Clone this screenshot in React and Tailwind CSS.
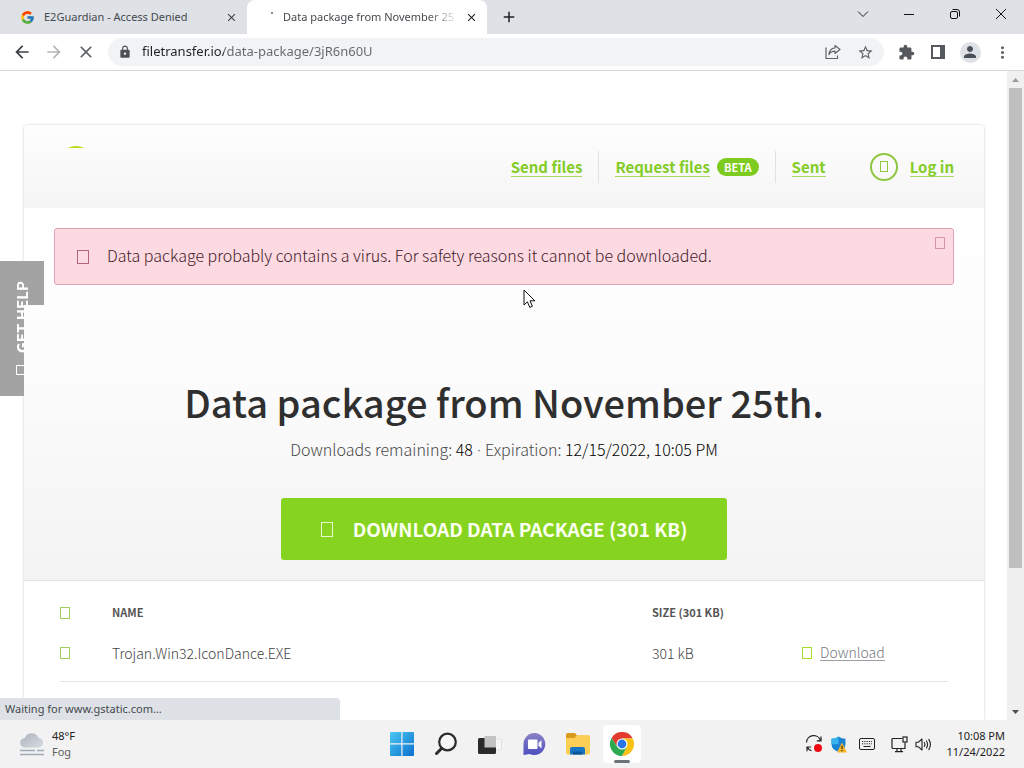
import React from "react";
import {
  MdArrowBack,
  MdArrowForward,
  MdClose,
  MdLock,
  MdStarBorder,
  MdExtension,
  MdMoreVert,
  MdPerson,
  MdAdd,
} from "react-icons/md";
import { FcGoogle } from "react-icons/fc";

/* Outline box shown while the icon font is loading */
function Glyph({ className = "" }) {
  return <span aria-hidden="true" className={`inline-block shrink-0 border ${className}`} />;
}

function ShareIcon() {
  return (
    <svg width="16" height="16" viewBox="0 0 16 16" fill="none" stroke="#5f6368" strokeWidth="1.2" strokeLinejoin="round">
      <path d="M1 3.5V14.5H12.5V11.5" />
      <path d="M10 1.5L15 5.5L10 9.5V7.2C7 7.2 5.2 8.2 4 10.6C4.2 6.6 6.6 4.2 10 3.8Z" />
    </svg>
  );
}

function PanelIcon() {
  return (
    <svg width="14" height="14" viewBox="0 0 14 14">
      <rect x="1" y="1" width="12" height="12" fill="#fff" stroke="#55585c" strokeWidth="2" />
      <rect x="9" y="1" width="4" height="12" fill="#55585c" />
    </svg>
  );
}

function TabStrip() {
  return (
    <header className="flex h-[34px] shrink-0 bg-[#dee1e6] text-[11px]">
      <div className="flex w-[247px] shrink-0 items-center pl-5 pr-2">
        <FcGoogle size={15} />
        <span className="ml-[9px] flex-1 text-[#45494d]">E2Guardian - Access Denied</span>
        <button aria-label="Close tab" className="flex size-4 items-center justify-center text-[#3c4043]">
          <MdClose size={13} />
        </button>
      </div>
      <div className="relative flex w-[240px] shrink-0 items-center rounded-t-lg bg-white pl-9 pr-2">
        <span className="absolute left-6 top-3 size-[2px] rounded-full bg-[#5f6368]" />
        <span className="flex-1 overflow-hidden whitespace-nowrap text-[#45494d] [mask-image:linear-gradient(to_right,black_82%,transparent)]">
          Data package from November 25
        </span>
        <button aria-label="Close tab" className="ml-1 flex size-4 shrink-0 items-center justify-center text-[#202124]">
          <MdClose size={13} />
        </button>
      </div>
      <button aria-label="New tab" className="flex w-11 items-center justify-center text-[#202124]">
        <MdAdd size={18} />
      </button>
      <div className="ml-auto flex h-7">
        <button aria-label="Search tabs" className="flex w-[46px] items-center justify-center">
          <svg width="12" height="12" viewBox="0 0 12 12" fill="none" stroke="#222">
            <path d="M1 3.5L6 8.5L11 3.5" />
          </svg>
        </button>
        <button aria-label="Minimize" className="flex w-[46px] items-center justify-center">
          <svg width="10" height="11" viewBox="0 0 10 11" stroke="#111">
            <path d="M0 5.5H10" />
          </svg>
        </button>
        <button aria-label="Restore" className="flex w-[46px] items-center justify-center">
          <svg width="10" height="10" viewBox="0 0 10 10" fill="none" stroke="#111">
            <rect x="0.5" y="2.5" width="7" height="7" rx="1.5" />
            <path d="M2.5 0.5H7A2.5 2.5 0 0 1 9.5 3V7.5" />
          </svg>
        </button>
        <button aria-label="Close window" className="flex w-[46px] items-center justify-center">
          <svg width="10" height="10" viewBox="0 0 10 10" stroke="#111">
            <path d="M0 0L10 10M10 0L0 10" />
          </svg>
        </button>
      </div>
    </header>
  );
}

function Toolbar() {
  return (
    <div className="flex h-[37px] shrink-0 items-center border-b border-[#d5d7da] bg-white pl-3 text-[#5f6368]">
      <button aria-label="Back" className="mr-3 text-[#3c4043]"><MdArrowBack size={20} /></button>
      <button aria-label="Forward" className="mr-3 text-[#b4b7ba]"><MdArrowForward size={20} /></button>
      <button aria-label="Stop loading"><MdClose size={20} /></button>
      <form className="ml-3 mr-1.5 flex h-7 flex-1 items-center rounded-full bg-[#f1f3f4] px-2.5">
        <MdLock size={14} className="shrink-0 text-[#4d5156]" />
        <input
          aria-label="Address"
          defaultValue="filetransfer.io/data-package/3jR6n60U"
          className="ml-2.5 min-w-0 flex-1 bg-[linear-gradient(90deg,#202124_82px,#63676b_82px)] bg-clip-text text-[13px] text-transparent outline-none"
        />
        <button type="button" aria-label="Share" className="mr-4"><ShareIcon /></button>
        <button type="button" aria-label="Bookmark"><MdStarBorder size={17} /></button>
      </form>
      <button aria-label="Extensions" className="flex w-8 justify-center text-[#55585c]"><MdExtension size={17} /></button>
      <button aria-label="Side panel" className="flex w-8 justify-center"><PanelIcon /></button>
      <button aria-label="Profile" className="flex w-8 justify-center">
        <span className="flex size-[21px] items-center justify-center rounded-full bg-[#dee1e6] text-[#4b5159]"><MdPerson size={18} /></span>
      </button>
      <button aria-label="Menu" className="mr-1.5 flex w-8 justify-center"><MdMoreVert size={19} /></button>
    </div>
  );
}

function SiteNav() {
  const link = "border-b border-[#a4d860] leading-[19px]";
  return (
    <div className="flex h-[83px] items-center rounded-t bg-linear-to-b from-[#fefefe] to-[#f5f5f5] pl-11 pr-[30px]">
      <svg width="16" height="2" viewBox="0 0 16 2" className="-mt-10">
        <path d="M0 2Q4 0 8 0T16 2Z" fill="#b9dc18" />
      </svg>
      <nav className="ml-auto flex items-center text-[15px] font-bold text-[#84cc26]">
        <a href="#send" className={link}>Send files</a>
        <span className="mx-4 h-8 w-px bg-[#e2e2e2]" />
        <a href="#request" className={link}>Request files</a>
        <span className="ml-[7px] rounded-full bg-[#7ecb20] px-[7px] text-[11px] leading-[18px] text-white">BETA</span>
        <span className="mx-4 h-8 w-px bg-[#e2e2e2]" />
        <a href="#sent" className={link}>Sent</a>
        <a href="#login" className="ml-11 flex items-center">
          <span className="mr-3 flex size-7 items-center justify-center rounded-full border-2 border-[#8fc741]">
            <Glyph className="h-[11px] w-2 border-[#8fc741]" />
          </span>
          <span className={link}>Log in</span>
        </a>
      </nav>
    </div>
  );
}

function Hero() {
  return (
    <section className="border-b border-[#e3e3e3] bg-linear-to-b from-white via-[#fbfbfb] to-[#f3f3f3] px-[30px] py-5 text-center">
      <div role="alert" className="flex h-[57px] rounded-[3px] border border-[#dfa3b3] bg-[#fdd9e1] pl-[22px] pr-2 text-left text-[#3f2029]">
        <Glyph className="mt-[21px] h-[14px] w-3 border-[#b0657b]" />
        <p className="ml-[18px] flex-1 text-base font-light leading-[53px]">
          Data package probably contains a virus. For safety reasons it cannot be downloaded.
        </p>
        <button aria-label="Dismiss" className="mt-2 flex self-start">
          <Glyph className="h-3 w-2.5 border-[#d395a6]" />
        </button>
      </div>
      <h1 className="mt-[91px] text-[38px] font-medium leading-[52px] text-[#2f2f2f]">Data package from November 25th.</h1>
      <p className="mt-[9px] text-base font-light leading-6 text-[#484848]">
        Downloads remaining: <span className="text-black">48</span>
        <span className="font-['Open_Sans',sans-serif]"> · </span>
        Expiration: <span className="text-black">12/15/2022, 10:05 PM</span>
      </p>
      <button className="mt-9 inline-flex h-[62px] items-center rounded-[3px] bg-[#86d41f] px-10 align-top text-[19px] font-bold text-[#fbfff0]">
        <Glyph className="mr-5 h-[15px] w-3 border-[#e8f8cf]" />
        DOWNLOAD DATA PACKAGE (301 KB)
      </button>
    </section>
  );
}

function FileTable() {
  const check = "block h-3 w-2.5 appearance-none border border-[#a0cf60] bg-white";
  return (
    <div className="px-9 pt-3">
      <table className="w-full table-fixed border-collapse text-left text-sm text-[#444]">
        <colgroup>
          <col className="w-[52px]" />
          <col />
          <col className="w-[150px]" />
          <col className="w-[146px]" />
        </colgroup>
        <thead>
          <tr className="h-10 text-[11px] text-[#555]">
            <th><input type="checkbox" aria-label="Select all files" className={check} /></th>
            <th>NAME</th>
            <th>SIZE (301 KB)</th>
            <th aria-label="Actions" />
          </tr>
        </thead>
        <tbody>
          <tr className="border-b border-[#e4e4e4] font-light">
            <td className="h-12 pb-2"><input type="checkbox" aria-label="Select Trojan.Win32.IconDance.EXE" className={check} /></td>
            <td className="pb-2">Trojan.Win32.IconDance.EXE</td>
            <td className="pb-2">301 kB</td>
            <td className="pb-2">
              <a href="#download" className="flex items-center text-[#777b7f]">
                <Glyph className="mr-2 h-3 w-2.5 border-[#a5dc2e]" />
                <span className="border-b border-[#9a9fa3] leading-4">Download</span>
              </a>
            </td>
          </tr>
        </tbody>
      </table>
    </div>
  );
}

function Scrollbar() {
  return (
    <div aria-hidden="true" className="flex w-[17px] shrink-0 flex-col items-center bg-[#f0f0f0]">
      <svg className="shrink-0" width="17" height="17" viewBox="0 0 17 17"><path d="M5 11L8.5 7L12 11Z" fill="#9b9b9b" /></svg>
      <div className="h-[74%] w-[13px] bg-[#bfbfbf]" />
      <svg className="mt-auto shrink-0" width="17" height="17" viewBox="0 0 17 17"><path d="M5 7L8.5 11L12 7Z" fill="#4d4d4d" /></svg>
    </div>
  );
}

function Page() {
  return (
    <main className="relative flex min-h-0 flex-1 bg-white">
      <div className="min-w-0 flex-1 overflow-hidden pl-6 pr-[23px] pt-[54px] font-['Noto_Sans_CJK_SC',sans-serif]">
        <div className="h-full rounded-t shadow-[0_0_3px_rgba(0,0,0,0.2)]">
          <SiteNav />
          <Hero />
          <FileTable />
        </div>
      </div>
      <Scrollbar />
      <button className="absolute left-0 top-[190px] flex h-[135px] w-11 justify-center bg-[#a3a3a3] font-['Noto_Sans_CJK_SC',sans-serif] text-[15px] font-bold text-white [clip-path:polygon(0_0,44px_0,44px_44px,24px_44px,24px_100%,0_100%)]">
        <span className="flex h-full w-11 rotate-180 items-center pt-[21px] leading-[44px] [writing-mode:vertical-rl]">
          <Glyph className="mb-3 h-2.5 w-3 border-white" />
          GET HELP
        </span>
      </button>
      <svg className="absolute left-[523px] top-[218px]" width="13" height="20" viewBox="0 0 13 20">
        <path d="M1 1V16L4.4 12.8L6.8 18.4L9.4 17.3L7 11.8H11.8Z" fill="#fff" stroke="#111" />
      </svg>
      <div className="absolute bottom-0 left-0 h-[22px] w-[340px] rounded-tr bg-[#dee1e6] pl-[5px] text-[11px] leading-[22px] text-[#45494d]">
        Waiting for www.gstatic.com...
      </div>
    </main>
  );
}

function ChromeLogo() {
  return (
    <svg width="24" height="24" viewBox="0 0 24 24">
      <path d="M12 6.5H22.7A12 12 0 0 0 1.6 6L7.2 14.8Z" fill="#e33b2e" />
      <path d="M16.8 14.8L12 24A12 12 0 0 0 22.7 6.5H12Z" fill="#fbc116" />
      <path d="M7.2 14.8L1.6 6A12 12 0 0 0 12 24L16.8 14.8Z" fill="#2da94f" />
      <circle cx="12" cy="12" r="5.5" fill="#fff" />
      <circle cx="12" cy="12" r="4.4" fill="#2874e8" />
    </svg>
  );
}

function Taskbar() {
  const app = "flex h-12 w-11 items-center justify-center";
  return (
    <footer className="grid h-12 shrink-0 grid-cols-[1fr_auto_1fr] items-center bg-[#f2f2f2] text-[#222]">
      <button className="flex items-center pl-5 text-left text-[11px] leading-4">
        <svg width="24" height="24" viewBox="0 0 24 24">
          <defs>
            <linearGradient id="cloud" x1="0" y1="0" x2="1" y2="1">
              <stop offset="0" stopColor="#aeb4ba" />
              <stop offset="1" stopColor="#d5dbe2" />
            </linearGradient>
          </defs>
          <path d="M5 15.5A4.7 4.7 0 0 1 4.7 6A7.5 7.5 0 0 1 18.7 6A4.8 4.8 0 0 1 19 15.5Z" fill="url(#cloud)" />
          <path d="M0 18.5H15M17 18.5H24M0 22.5H24" stroke="#9fabb8" strokeWidth="1.6" />
        </svg>
        <span className="ml-2">48°F<br /><span className="text-[#5e5e5e]">Fog</span></span>
      </button>
      <div className="flex">
        <button aria-label="Start" className={app}>
          <svg width="24" height="24" viewBox="0 0 24 24">
            <defs>
              <linearGradient id="win" x1="0" y1="0" x2="1" y2="1">
                <stop offset="0" stopColor="#4cc8f4" />
                <stop offset="1" stopColor="#0a70cc" />
              </linearGradient>
            </defs>
            <path d="M0 1Q0 0 1 0H11.3V11.3H0ZM12.5 0H23Q24 0 24 1V11.3H12.5ZM0 12.5H11.3V24H1Q0 24 0 23ZM12.5 12.5H24V23Q24 24 23 24H12.5Z" fill="url(#win)" />
          </svg>
        </button>
        <button aria-label="Search" className={app}>
          <svg width="24" height="24" viewBox="0 0 24 24" fill="none" stroke="#2b2b2b" strokeLinecap="round">
            <circle cx="13.5" cy="10" r="8.3" fill="#f8f8f8" strokeWidth="2.2" />
            <path d="M7.5 16.5L2.5 21.5" strokeWidth="3" />
          </svg>
        </button>
        <button aria-label="Task view" className={app}>
          <svg width="24" height="24" viewBox="0 0 24 24">
            <rect x="7" y="7" width="16.5" height="11" rx="1" fill="#f8f8f8" stroke="#e0e0e0" />
            <rect x="0" y="6" width="18" height="16" rx="1.5" fill="#2b2b2b" />
            <path d="M6.5 4H18V15.5H6.5Z" fill="#c3c3c3" />
          </svg>
        </button>
        <button aria-label="Chat" className={app}>
          <svg width="24" height="24" viewBox="0 0 24 24">
            <defs>
              <linearGradient id="chat" x1="0" y1="0" x2="0" y2="1">
                <stop offset="0" stopColor="#8b82c6" />
                <stop offset="1" stopColor="#4d4fbd" />
              </linearGradient>
            </defs>
            <path d="M12.5 1A11 11 0 1 1 7.5 21.9L1.5 23V12A11 11 0 0 1 12.5 1Z" fill="url(#chat)" />
            <rect x="6" y="7.5" width="9.5" height="9.5" rx="1" fill="#fff" />
            <path d="M16.5 11L19.5 8V16.5L16.5 13.5Z" fill="#fff" />
          </svg>
        </button>
        <button aria-label="File Explorer" className={app}>
          <svg width="24" height="24" viewBox="0 0 24 24">
            <path d="M0 3Q0 1 2 1H9L11 3.5H22.5Q24 3.5 24 5V9H0Z" fill="#d99a1c" />
            <path d="M0 6H8.5L11 3.2H22.5Q24 3.2 24 5V20.5Q24 22.5 22 22.5H2Q0 22.5 0 20.5Z" fill="#fbcf55" />
            <path d="M4 22.5V17Q4 15 6 15H17Q19 15 19 17V22.5Z" fill="#1674c5" />
            <path d="M7 22.5V20.5Q7 19.5 8 19.5H15Q16 19.5 16 20.5V22.5Z" fill="#0b559d" />
          </svg>
        </button>
        <button aria-label="Google Chrome" className="relative flex h-12 w-11 items-center justify-center">
          <span className="flex size-[38px] items-center justify-center rounded bg-white"><ChromeLogo /></span>
          <span className="absolute bottom-[5px] h-[3px] w-4 rounded-full bg-[#6c7378]" />
        </button>
      </div>
      <div className="flex items-center justify-end pr-[19px]">
        <button aria-label="Updates">
          <svg width="18" height="18" viewBox="0 0 18 18" fill="none" stroke="#222" strokeWidth="1.2">
            <path d="M1.5 7.5A7.2 7.2 0 0 1 15.5 5.5M16 1.5V5.8H11.8M6.5 15.8A7 7 0 0 1 2.2 12M2 16.2V12H6.2" />
            <circle cx="13" cy="13" r="4" fill="#ee0c12" stroke="none" />
          </svg>
        </button>
        <button aria-label="Security" className="ml-2">
          <svg width="16" height="17" viewBox="0 0 16 17">
            <path d="M7.5 0.5Q10.5 2.8 14.5 2.8V8Q14.5 13.5 7.5 16Q0.5 13.5 0.5 8V2.8Q4.5 2.8 7.5 0.5Z" fill="#1b83d4" />
            <path d="M7.5 0.5V8.2H0.5V2.8Q4.5 2.8 7.5 0.5Z" fill="#35b3ee" />
            <path d="M11 6.5L16 16.5H6Z" fill="#fbb62c" />
            <path d="M11 9.8V13M11 14V15.2" stroke="#33280f" strokeWidth="1.2" />
          </svg>
        </button>
        <button aria-label="Touch keyboard" className="ml-3">
          <svg width="16" height="12" viewBox="0 0 16 12" fill="none" stroke="#222">
            <rect x="0.5" y="0.5" width="15" height="11" rx="1.5" />
            <path d="M3 3.5H13M3 5.8H13" strokeDasharray="1.2 1.1" />
            <path d="M4.5 8.5H11.5" />
          </svg>
        </button>
        <button aria-label="Network" className="ml-4">
          <svg width="17" height="17" viewBox="0 0 17 17" fill="none" stroke="#222" strokeWidth="1.2">
            <path d="M11 2.5H2Q1 2.5 1 3.5V11.5Q1 12.5 2 12.5H14V6.5M6 12.5V15.5M10 12.5V15.5M4 15.6H12" />
            <rect x="12" y="1" width="4" height="5" />
          </svg>
        </button>
        <button aria-label="Volume" className="ml-[7px]">
          <svg width="17" height="15" viewBox="0 0 17 15" fill="none" stroke="#222" strokeWidth="1.1" strokeLinecap="round" strokeLinejoin="round">
            <path d="M1 5.2H3.5L7 2V13L3.5 9.8H1ZM9.3 5.5Q10.5 7.5 9.3 9.5M11.5 4Q13.6 7.5 11.5 11M13.8 2.4Q17 7.5 13.8 12.6" />
          </svg>
        </button>
        <time className="ml-[14px] text-right text-[11px] leading-4">10:08 PM<br />11/24/2022</time>
      </div>
    </footer>
  );
}

export default function App() {
  return (
    <div className="flex h-screen flex-col overflow-hidden bg-white font-['Noto_Sans','Open_Sans',sans-serif]">
      <TabStrip />
      <Toolbar />
      <Page />
      <Taskbar />
    </div>
  );
}
